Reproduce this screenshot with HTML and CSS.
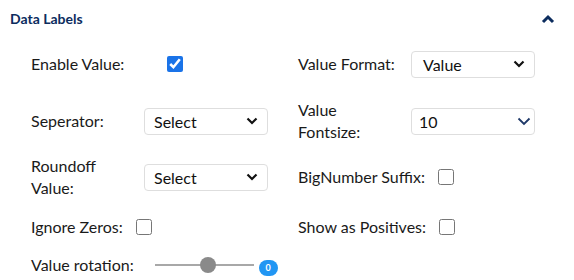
FILE: index.html
```html
<!DOCTYPE html>
<html>
<head>
<meta charset="utf-8">
<link rel="stylesheet" href="styles.css">
</head>
<body>
<div class="panel">
  <div class="header">
    <span class="title">Data Labels</span>
    <svg class="collapse" width="14" height="10" viewBox="0 0 14 10"><path d="M2 8 L7 3 L12 8" fill="none" stroke="#0c2c5e" stroke-width="3"/></svg>
  </div>
  <div class="form">
    <div class="field row1">
      <label class="lbl">Enable Value:</label>
      <div class="ctl"><input type="checkbox" class="chk chk-enable" checked></div>
    </div>
    <div class="field row1">
      <label class="lbl">Value Format:</label>
      <div class="sel sel-wide"><span>Value</span><svg width="12" height="8" viewBox="0 0 12 8"><path d="M1.5 1.5 L6 6 L10.5 1.5" fill="none" stroke="#111" stroke-width="2.2"/></svg></div>
    </div>

    <div class="field row2">
      <label class="lbl">Seperator:</label>
      <div class="sel"><span>Select</span><svg width="12" height="8" viewBox="0 0 12 8"><path d="M1.5 1.5 L6 6 L10.5 1.5" fill="none" stroke="#111" stroke-width="2.2"/></svg></div>
    </div>
    <div class="field row2">
      <label class="lbl two">Value Fontsize:</label>
      <div class="sel sel-num"><span>10</span><svg width="14" height="9" viewBox="0 0 14 9"><path d="M1.5 1.5 L7 7 L12.5 1.5" fill="none" stroke="#1e3868" stroke-width="1.8"/></svg></div>
    </div>

    <div class="field row3">
      <label class="lbl two">Roundoff Value:</label>
      <div class="sel"><span>Select</span><svg width="12" height="8" viewBox="0 0 12 8"><path d="M1.5 1.5 L6 6 L10.5 1.5" fill="none" stroke="#111" stroke-width="2.2"/></svg></div>
    </div>
    <div class="field row3 inline">
      <label class="lbl">BigNumber Suffix:</label>
      <input type="checkbox" class="chk">
    </div>

    <div class="field row4 inline">
      <label class="lbl">Ignore Zeros:</label>
      <input type="checkbox" class="chk">
    </div>
    <div class="field row4 inline">
      <label class="lbl">Show as Positives:</label>
      <input type="checkbox" class="chk">
    </div>

    <div class="field row5 inline">
      <label class="lbl nowrap">Value rotation:</label>
      <div class="slider">
        <div class="track"><div class="thumb"></div></div>
        <span class="badge">0</span>
      </div>
    </div>
  </div>
</div>
</body>
</html>
```

FILE: styles.css
```css
* { box-sizing: border-box; }
body {
  margin: 0;
  background: #fff;
  font-family: Lato, "Open Sans", sans-serif;
  color: #1a1a1a;
}
.panel { width: 574px; }
.header {
  display: flex;
  justify-content: space-between;
  align-items: center;
  padding: 6px 19px 0 10px;
  height: 30px;
}
.title {
  font-weight: 700;
  font-size: 14px;
  color: #0c2c5e;
}
.collapse { margin-top: 2px; }
.form {
  display: grid;
  grid-template-columns: 236px 237px;
  column-gap: 31px;
  padding: 20px 0 0 31px;
}
.field {
  display: grid;
  grid-template-columns: 113px 124px;
  align-items: center;
  font-size: 16px;
}
.field.inline {
  display: flex;
  align-items: center;
}
.row1 { height: 28px; }
.row2 { height: 44px; margin-top: 21px; }
.row3 { height: 44px; margin-top: 12px; }
.row4 { height: 28px; margin-top: 14px; }
.row5 { height: 28px; margin-top: 10px; }
.lbl { line-height: 22px; }
.lbl.two { width: 80px; }
.nowrap { white-space: nowrap; }
.ctl { display: flex; align-items: center; }
.chk {
  width: 16px;
  height: 16px;
  margin: 0;
  accent-color: #1a73e8;
}
.chk-enable { margin-left: 23px; }
.inline .chk { margin-left: 13px; }
.sel {
  display: flex;
  align-items: center;
  justify-content: space-between;
  height: 27px;
  border: 1px solid #dedede;
  border-radius: 4px;
  padding: 0 9px 0 9px;
  font-size: 16px;
  color: #111;
}
.sel-wide { padding-left: 11px; }
.sel-num { padding-left: 7px; padding-right: 3px; }
.slider {
  display: flex;
  align-items: center;
  margin-left: 21px;
}
.track {
  position: relative;
  width: 99px;
  height: 2px;
  background: #a8a8a8;
}
.thumb {
  position: absolute;
  left: 45px;
  top: -7px;
  width: 16px;
  height: 16px;
  border-radius: 50%;
  background: #8a8a8a;
}
.badge {
  display: inline-flex;
  align-items: center;
  justify-content: center;
  width: 19px;
  height: 16px;
  margin-left: 5px;
  margin-top: 5px;
  border-radius: 9px;
  background: #2196f3;
  color: #fff;
  font-size: 9px;
  font-weight: 700;
}
```
